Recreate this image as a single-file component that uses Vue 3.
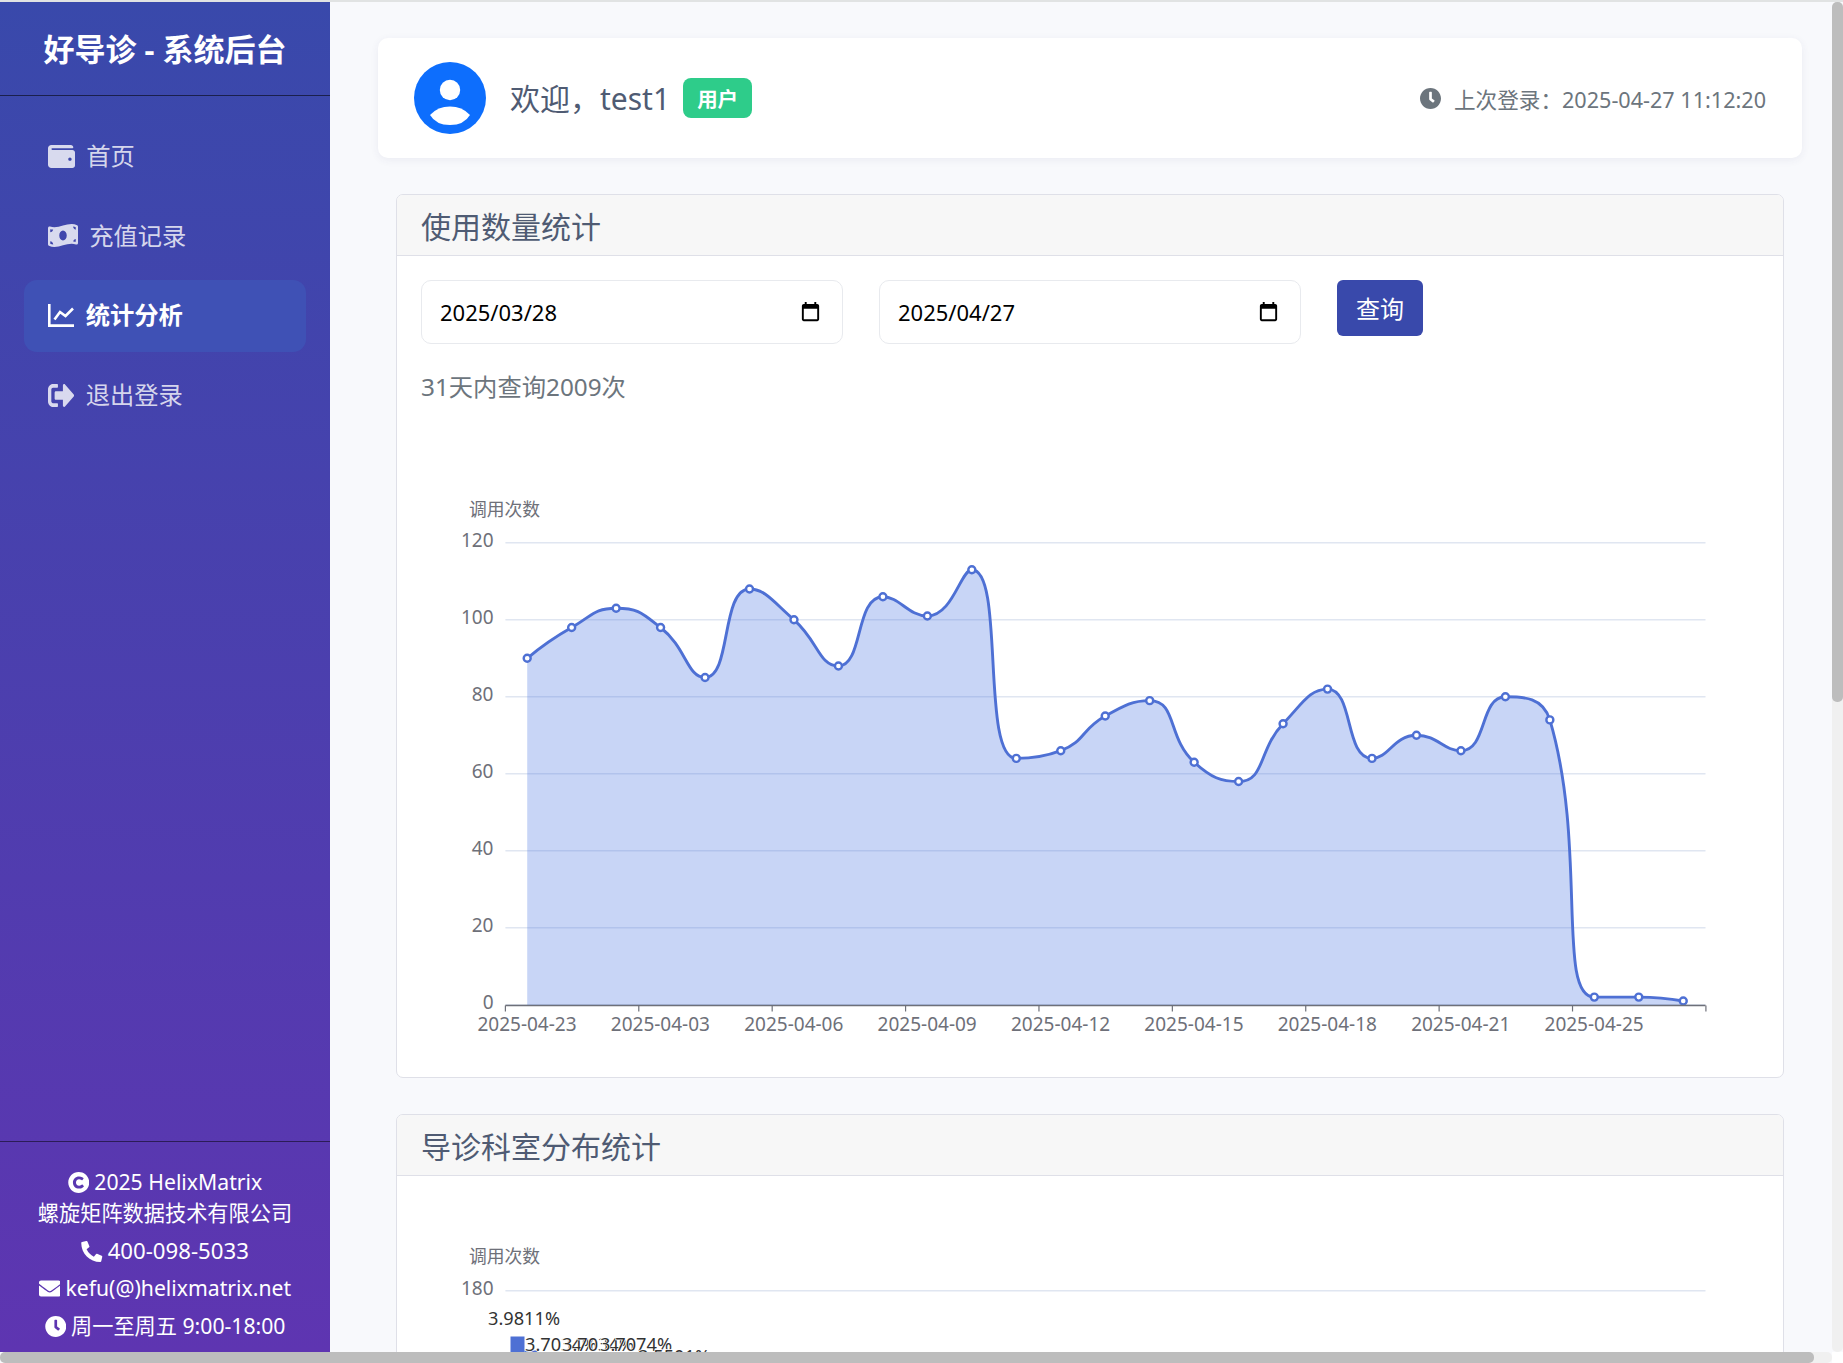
<template>
  <div class="page">
    <div class="top-strip"></div>
    <div class="layout">
      <aside class="sidebar">
        <div class="brand">好导诊 - 系统后台</div>
        <nav class="nav">
          <a v-for="item in navItems" :key="item.label" class="nav-item" :class="{ active: item.active }">
            <svg v-if="item.line" class="nav-icon" width="26.5" height="23" viewBox="0 0 26.5 23" fill="none" stroke="currentColor" stroke-width="2.6">
              <path d="M1.3 0V21.6H26.5" />
              <path d="M6.5 15.5L12 8L17.5 12L25 4.5" />
            </svg>
            <svg v-else class="nav-icon" :width="item.w" height="23" :viewBox="item.box" preserveAspectRatio="none" fill="currentColor">
              <path :d="item.d" />
            </svg>
            <span class="nav-text">{{ item.label }}</span>
          </a>
        </nav>
        <div class="side-footer">
          <p>
            <svg class="foot-icon" viewBox="8 8 496 496" fill="currentColor"><path :d="icons.copyright" /></svg>2025 HelixMatrix<br />螺旋矩阵数据技术有限公司
          </p>
          <p class="wide"><svg class="foot-icon" viewBox="0 0 512 512" fill="currentColor"><path :d="icons.phone" /></svg>400-098-5033</p>
          <p><svg class="foot-icon" viewBox="0 64 512 384" fill="currentColor"><path :d="icons.envelope" /></svg>kefu(@)helixmatrix.net</p>
          <p><svg class="foot-icon" viewBox="8 8 496 496" fill="currentColor"><path :d="icons.clock" /></svg>周一至周五 9:00-18:00</p>
        </div>
      </aside>

      <main class="main">
        <section class="welcome">
          <div class="welcome-left">
            <svg class="avatar" width="72" height="72" viewBox="0 0 72 72">
              <circle cx="36" cy="36" r="36" fill="#0d6efd" />
              <circle cx="36" cy="28" r="10.2" fill="#fff" />
              <path d="M16 53Q24 44.6 36 44.6Q48 44.6 56 53Q50 63 36 63Q22 63 16 53Z" fill="#fff" />
            </svg>
            <span class="hello">欢迎，test1</span>
            <span class="badge">用户</span>
          </div>
          <div class="last-login">
            <svg width="21" height="21" viewBox="8 8 496 496" fill="currentColor"><path :d="icons.clock" /></svg>
            <span>上次登录：2025-04-27 11:12:20</span>
          </div>
        </section>

        <section class="panel">
          <h2 class="panel-head">使用数量统计</h2>
          <div class="panel-body">
            <div class="filters">
              <div v-for="d in dates" :key="d" class="date-field">
                <span>{{ d }}</span>
                <svg width="23" height="23" viewBox="0 0 24 24" fill="#000"><path d="M19 3h-1V1h-2v2H8V1H6v2H5c-1.11 0-1.99.9-1.99 2L3 19c0 1.1.89 2 2 2h14c1.1 0 2-.9 2-2V5c0-1.1-.9-2-2-2zm0 16H5V8h14v11z" /></svg>
              </div>
              <button class="query-btn">查询</button>
            </div>
            <p class="summary">31天内查询2009次</p>
            <svg class="chart" width="1342" height="645" viewBox="421 405 1342 645">
              <text x="469" y="515" class="axis-name">调用次数</text>
              <g v-for="t in yTicks" :key="t">
                <line x1="505.4" x2="1705.5" :y1="yOf(t)" :y2="yOf(t)" stroke="#e0e6f1" stroke-width="1.4" />
                <text x="493.5" :y="yOf(t) + 4.2" text-anchor="end" class="axis-label">{{ t }}</text>
              </g>
              <path :d="areaPath" fill="#4a74e0" fill-opacity="0.3" />
              <path :d="linePath" fill="none" stroke="#4e70d4" stroke-width="2.9" />
              <circle v-for="(p, i) in points" :key="i" :cx="p[0]" :cy="p[1]" r="3.5" fill="#fff" stroke="#4e70d4" stroke-width="2.4" />
              <line x1="505.4" x2="1705.5" y1="1004.5" y2="1004.5" stroke="#6e7079" stroke-width="1.4" />
              <line v-for="k in 10" :key="'t' + k" :x1="505.4 + (k - 1) * 133.39" :x2="505.4 + (k - 1) * 133.39" y1="1004.5" y2="1010.5" stroke="#6e7079" stroke-width="1.2" />
              <text v-for="(l, i) in xLabels" :key="l" :x="527 + i * 133.39" y="1030" text-anchor="middle" class="axis-label">{{ l }}</text>
            </svg>
          </div>
        </section>

        <section class="panel">
          <h2 class="panel-head">导诊科室分布统计</h2>
          <div class="panel-body second">
            <svg class="chart" width="1342" height="170" viewBox="421 1235 1342 170">
              <text x="469" y="1262" class="axis-name">调用次数</text>
              <line x1="505.4" x2="1705.5" y1="1289.7" y2="1289.7" stroke="#e0e6f1" stroke-width="1.4" />
              <text x="493.5" y="1293.5" text-anchor="end" class="axis-label">180</text>
              <text x="493.5" y="1365" text-anchor="end" class="axis-label">150</text>
              <rect x="510.5" y="1335.5" width="14" height="40" fill="#4e70d4" />
              <rect x="524.5" y="1349.5" width="13" height="30" fill="#4e70d4" />
              <text x="488" y="1324" class="bar-label">3.9811%</text>
              <text x="525" y="1349.5" class="bar-label">3.7034%</text>
              <text x="562" y="1349.5" class="bar-label">3.7034%</text>
              <text x="600" y="1349.5" class="bar-label">3.7074%</text>
              <text x="638" y="1362" class="bar-label">3.5501%</text>
            </svg>
          </div>
        </section>
      </main>
    </div>
    <div class="track-v"><div class="thumb-v"></div></div>
    <div class="track-h"><div class="thumb-h"></div></div>
    <div class="corner"></div>
  </div>
</template>

<script setup>
import { computed } from 'vue';

const icons = {
  copyright: 'M256 8C119.033 8 8 119.033 8 256s111.033 248 248 248 248-111.033 248-248S392.967 8 256 8zm117.134 346.753c-1.592 1.867-39.776 45.731-109.851 45.731-84.692 0-144.484-63.26-144.484-145.567 0-81.303 62.004-143.401 143.762-143.401 66.957 0 101.965 37.315 103.422 38.904a12 12 0 0 1 1.238 14.623l-22.38 34.655c-4.049 6.267-12.774 7.351-18.234 2.295-.233-.214-26.529-23.88-61.88-23.88-46.116 0-73.916 33.575-73.916 76.082 0 39.602 25.514 79.692 74.277 79.692 38.697 0 65.28-28.338 65.544-28.625 5.132-5.565 14.059-5.033 18.501 1.053l24.547 33.572a12.001 12.001 0 0 1-.51 14.66z',
  phone: 'M497.39 361.8l-112-48a24 24 0 0 0-28 6.9l-49.6 60.6A370.66 370.66 0 0 1 130.6 204.11l60.6-49.6a23.94 23.94 0 0 0 6.9-28l-48-112A24.16 24.16 0 0 0 122.6.61l-104 24A24 24 0 0 0 0 48c0 256.5 207.9 464 464 464a24 24 0 0 0 23.4-18.6l24-104a24.29 24.29 0 0 0-14.01-27.6z',
  envelope: 'M502.3 190.8c3.9-3.1 9.7-.2 9.7 4.7V400c0 26.5-21.5 48-48 48H48c-26.5 0-48-21.5-48-48V195.6c0-5 5.7-7.8 9.7-4.7 22.4 17.4 52.1 39.5 154.1 113.6 21.1 15.4 56.7 47.8 92.2 47.6 35.7.3 72-32.8 92.3-47.6 102-74.1 131.6-96.3 154-113.7zM256 320c23.2.4 56.6-29.2 73.4-41.4 132.7-96.3 142.8-104.7 173.4-128.7 5.8-4.5 9.2-11.5 9.2-18.9v-19c0-26.5-21.5-48-48-48H48C21.5 64 0 85.5 0 112v19c0 7.4 3.4 14.3 9.2 18.9 30.6 23.9 40.7 32.4 173.4 128.7 16.8 12.2 50.2 41.8 73.4 41.4z',
  clock: 'M256,8C119,8,8,119,8,256S119,504,256,504,504,393,504,256,393,8,256,8Zm92.49,313h0l-20,25a16,16,0,0,1-22.49,2.5h0l-67-49.72a40,40,0,0,1-15-31.23V112a16,16,0,0,1,16-16h32a16,16,0,0,1,16,16V256l58,42.5A16,16,0,0,1,348.49,321Z'
};

const navItems = [
  {
    label: '首页',
    w: 27,
    box: '0 32 512 448',
    d: 'M461.2 128H80c-8.84 0-16-7.16-16-16s7.16-16 16-16h384c8.84 0 16-7.16 16-16 0-26.51-21.49-48-48-48H64C28.65 32 0 60.65 0 96v320c0 35.35 28.65 64 64 64h397.2c28.02 0 50.8-21.53 50.8-48V176c0-26.47-22.78-48-50.8-48zM416 340c-17.67 0-32-14.33-32-32s14.33-32 32-32 32 14.33 32 32-14.33 32-32 32z'
  },
  {
    label: '充值记录',
    w: 30,
    box: '0 32 640 448',
    d: 'M621.16 54.46C582.37 38.19 543.55 32 504.75 32c-123.17-.01-246.33 62.34-369.5 62.34-30.89 0-61.76-3.92-92.65-13.72-3.47-1.1-6.95-1.62-10.35-1.62C15.04 79 0 92.32 0 110.81v317.26c0 12.63 7.23 24.6 18.84 29.46C57.63 473.81 96.45 480 135.25 480c123.17 0 246.34-62.35 369.51-62.35 30.89 0 61.76 3.92 92.65 13.72 3.47 1.1 6.95 1.62 10.35 1.62 17.21 0 32.25-13.32 32.25-31.81V83.93c-.01-12.64-7.24-24.6-18.85-29.47zM48 132.22c20.12 5.04 41.12 7.57 62.72 8.93C104.84 170.54 79 192.69 48 192.69v-60.47zm0 285.2v-47.78c34.37 0 62.18 27.27 63.71 61.4-22.53-1.81-43.59-6.31-63.71-13.62zM320 352c-44.19 0-80-42.99-80-96 0-53.02 35.82-96 80-96s80 42.98 80 96c0 53.03-35.83 96-80 96zm272 27.78c-17.52-4.39-35.71-6.85-54.32-8.44 5.87-26.08 27.5-45.88 54.32-49.28v57.72zm0-236.11c-30.89-3.91-54.86-29.7-55.81-61.55 19.54 2.17 38.09 6.23 55.81 12.66v48.89z'
  },
  { label: '统计分析', active: true, line: true },
  {
    label: '退出登录',
    w: 26.5,
    box: '0 64 512 384',
    d: 'M497 273L329 441c-15 15-41 4.5-41-17v-96H152c-13.3 0-24-10.7-24-24v-96c0-13.3 10.7-24 24-24h136V88c0-21.4 25.9-32 41-17l168 168c9.3 9.4 9.3 24.6 0 34zM192 436v-40c0-6.6-5.4-12-12-12H96c-17.7 0-32-14.3-32-32V160c0-17.7 14.3-32 32-32h84c6.6 0 12-5.4 12-12V76c0-6.6-5.4-12-12-12H96c-53 0-96 43-96 96v192c0 53 43 96 96 96h84c6.6 0 12-5.4 12-12z'
  }
];

const dates = ['2025/03/28', '2025/04/27'];

const values = [90, 98, 103, 98, 85, 108, 100, 88, 106, 101, 113, 64, 66, 75, 79, 63, 58, 73, 82, 64, 70, 66, 80, 74, 2, 2, 1];
const yTicks = [0, 20, 40, 60, 80, 100, 120];
const xLabels = ['2025-04-23', '2025-04-03', '2025-04-06', '2025-04-09', '2025-04-12', '2025-04-15', '2025-04-18', '2025-04-21', '2025-04-25'];

const yOf = (v) => 1003.8 - v * 3.85;

const points = computed(() => values.map((v, i) => [527.2 + i * 44.463, yOf(v)]));

// same control point rule as a smoothed echarts line
const clamp = (v, a, b) => Math.min(Math.max(v, Math.min(a, b)), Math.max(a, b));

const linePath = computed(() => {
  const pts = points.value;
  const smooth = 0.5;
  const out = [];
  const next = [];
  pts.forEach((p, i) => {
    const prev = pts[i - 1];
    const nxt = pts[i + 1];
    if (!prev || !nxt) {
      out.push(p);
      next.push(p);
      return;
    }
    const lenPrev = Math.hypot(p[0] - prev[0], p[1] - prev[1]);
    const lenNext = Math.hypot(nxt[0] - p[0], nxt[1] - p[1]);
    const ratio = lenNext / (lenNext + lenPrev);
    let nx = clamp(p[0] + (nxt[0] - prev[0]) * smooth * ratio, p[0], nxt[0]);
    let ny = clamp(p[1] + (nxt[1] - prev[1]) * smooth * ratio, p[1], nxt[1]);
    const cx = clamp(p[0] - (nx - p[0]) * lenPrev / lenNext, p[0], prev[0]);
    const cy = clamp(p[1] - (ny - p[1]) * lenPrev / lenNext, p[1], prev[1]);
    nx = p[0] + (p[0] - cx) * lenNext / lenPrev;
    ny = p[1] + (p[1] - cy) * lenNext / lenPrev;
    out.push([cx, cy]);
    next.push([nx, ny]);
  });
  let d = `M${pts[0][0]} ${pts[0][1]}`;
  for (let i = 1; i < pts.length; i++) {
    d += `C${next[i - 1][0]} ${next[i - 1][1]} ${out[i][0]} ${out[i][1]} ${pts[i][0]} ${pts[i][1]}`;
  }
  return d;
});

const areaPath = computed(() => {
  const pts = points.value;
  return `${linePath.value}L${pts[pts.length - 1][0]} 1004.5L${pts[0][0]} 1004.5Z`;
});
</script>

<style scoped>
.page {
  position: relative;
  height: 100vh;
  display: flex;
  flex-direction: column;
  overflow: hidden;
  background: #f8f9fc;
  font-family: "Noto Sans", "Noto Sans CJK SC", sans-serif;
}

.top-strip {
  height: 2px;
  flex: none;
  background: #e1e3e3;
}

.layout {
  flex: 1;
  min-height: 0;
  display: flex;
  margin-bottom: 11px;
}

.sidebar {
  width: 330px;
  flex: none;
  display: flex;
  flex-direction: column;
  background: linear-gradient(180deg, #3949ab, #5e35b1);
  color: #fff;
}

.brand {
  height: 90px;
  padding-bottom: 3px;
  flex: none;
  display: flex;
  align-items: center;
  justify-content: center;
  border-bottom: 1px solid rgba(0, 0, 0, 0.55);
  font-size: 31px;
  font-weight: 700;
}

.nav {
  flex: 1;
  display: flex;
  flex-direction: column;
  gap: 7.7px;
  padding: 25px 24px 0;
}

.nav-item {
  height: 72px;
  display: flex;
  align-items: center;
  gap: 11.5px;
  padding-left: 23.7px;
  border-radius: 13px;
  font-size: 24.3px;
  color: rgba(255, 255, 255, 0.8);
}

.nav-item.active {
  background: #3f51b5;
  color: #fff;
  font-weight: 700;
}

.nav-icon {
  flex: none;
  margin-bottom: 2px;
}

.nav-text {
  padding-bottom: 5px;
}

.side-footer {
  flex: none;
  border-top: 1px solid rgba(0, 0, 0, 0.5);
  padding: 24px 0 5px;
  text-align: center;
  font-size: 21.2px;
  line-height: 31px;
}

.side-footer p {
  margin: 0 0 6.5px;
  white-space: nowrap;
}

.side-footer p.wide {
  font-size: 22.2px;
}

.foot-icon {
  width: 21.5px;
  height: 21px;
  margin-right: 5px;
  vertical-align: -3px;
}

.main {
  flex: 1;
  min-width: 0;
  padding: 36px 41px 0 48px;
  overflow: hidden;
}

.welcome {
  height: 120px;
  display: flex;
  align-items: center;
  justify-content: space-between;
  padding: 0 36px;
  background: #fff;
  border-radius: 10px;
  box-shadow: 0 2px 8px rgba(50, 60, 120, 0.07);
}

.welcome-left {
  display: flex;
  align-items: center;
}

.hello {
  margin-left: 24px;
  padding-bottom: 2px;
  font-size: 30px;
  color: #4f5b73;
}

.badge {
  margin-left: 13px;
  width: 69px;
  height: 40px;
  display: flex;
  align-items: center;
  justify-content: center;
  border-radius: 8px;
  background: #2ecc8a;
  color: #fff;
  font-size: 20.5px;
  font-weight: 700;
}

.last-login {
  display: flex;
  align-items: center;
  gap: 13px;
  font-size: 21.6px;
  color: #6c757d;
}

.panel {
  margin: 36px 18px 36px;
  background: #fff;
  border: 1px solid #dfe0e8;
  border-radius: 7px;
  overflow: hidden;
}

.panel-head {
  margin: 0;
  height: 60px;
  padding-left: 24px;
  display: flex;
  align-items: center;
  background: #f7f7f7;
  border-bottom: 1px solid #dfe0e8;
  font-size: 30px;
  font-weight: 400;
  color: #4f5b73;
}

.panel-body {
  padding: 24px 24px 26px;
}

.panel-body.second {
  padding-top: 60px;
}

.filters {
  display: flex;
  align-items: flex-start;
  gap: 36px;
}

.date-field {
  width: 422px;
  height: 64px;
  box-sizing: border-box;
  display: flex;
  align-items: center;
  justify-content: space-between;
  padding: 0 20px 0 18px;
  border: 1px solid #e8eaee;
  border-radius: 10px;
  font-size: 22px;
  color: #000;
}

.query-btn {
  width: 86px;
  height: 56px;
  padding: 0 0 2px;
  border: 0;
  border-radius: 6px;
  background: #3949ab;
  color: #fff;
  font-family: inherit;
  font-size: 24px;
}

.summary {
  margin: 19.5px 0 0;
  height: 42.5px;
  line-height: 46px;
  font-size: 24.3px;
  color: #6c757d;
}

.chart {
  display: block;
}

.axis-name {
  font-size: 17.8px;
  fill: #6e7079;
}

.axis-label {
  font-size: 19px;
  fill: #6e7079;
}

.bar-label {
  font-size: 18.2px;
  fill: #333;
  stroke: #fff;
  stroke-width: 1.5px;
  paint-order: stroke;
}

.track-v {
  position: absolute;
  top: 2px;
  right: 0;
  width: 11px;
  height: 1350px;
  border-radius: 5px;
  background: #f0f0f0;
}

.thumb-v {
  height: 700px;
  border-radius: 5px;
  background: #bdbdbd;
}

.track-h {
  position: absolute;
  left: 0;
  bottom: 0;
  width: 1832px;
  height: 11px;
  border-radius: 5px;
  background: #f0f0f0;
}

.thumb-h {
  width: 1814px;
  height: 11px;
  border-radius: 5px;
  background: #bdbdbd;
}

.corner {
  position: absolute;
  right: 0;
  bottom: 0;
  width: 11px;
  height: 11px;
  background: #fff;
}
</style>
